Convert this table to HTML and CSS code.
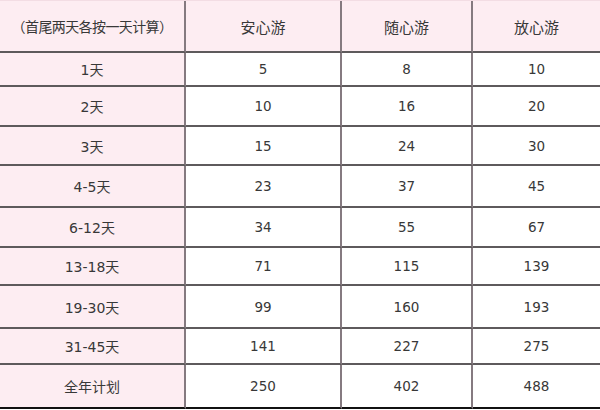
FILE: index.html
```html
<!DOCTYPE html>
<html lang="zh">
<head>
<meta charset="utf-8">
<link rel="stylesheet" href="styles.css">
</head>
<body>
<table class="price">
  <colgroup>
    <col class="c1"><col class="c2"><col class="c3"><col class="c4">
  </colgroup>
  <tr class="r0"><th class="label">（首尾两天各按一天计算）</th><th>安心游</th><th>随心游</th><th class="last">放心游</th></tr>
  <tr class="r1"><td class="label">1天</td><td>5</td><td>8</td><td class="last">10</td></tr>
  <tr class="r2"><td class="label">2天</td><td>10</td><td>16</td><td class="last">20</td></tr>
  <tr class="r3"><td class="label">3天</td><td>15</td><td>24</td><td class="last">30</td></tr>
  <tr class="r4"><td class="label">4-5天</td><td>23</td><td>37</td><td class="last">45</td></tr>
  <tr class="r5"><td class="label">6-12天</td><td>34</td><td>55</td><td class="last">67</td></tr>
  <tr class="r6"><td class="label">13-18天</td><td>71</td><td>115</td><td class="last">139</td></tr>
  <tr class="r7"><td class="label">19-30天</td><td>99</td><td>160</td><td class="last">193</td></tr>
  <tr class="r8"><td class="label">31-45天</td><td>141</td><td>227</td><td class="last">275</td></tr>
  <tr class="r9"><td class="label">全年计划</td><td>250</td><td>402</td><td class="last">488</td></tr>
</table>
</body>
</html>
```
FILE: styles.css
```css
html, body {
  margin: 0;
  padding: 0;
  background: #ffffff;
}
.price {
  width: 600px;
  table-layout: fixed;
  border-collapse: separate;
  border-spacing: 0;
  font-family: "DejaVu Sans", "Noto Sans CJK SC", sans-serif;
  font-size: 13.5px;
  color: #383838;
  border-top: 1px solid #f3dde4;
}
.c1 { width: 186px; }
.c2 { width: 156px; }
.c3 { width: 131px; }
.c4 { width: 127px; }
.price th, .price td {
  padding: 0;
  text-align: center;
  vertical-align: middle;
  font-weight: normal;
  border-bottom: 2px solid #5e5a5c;
  border-right: 2px solid #857a80;
  box-sizing: border-box;
  white-space: nowrap;
}
.price th {
  background: #fdedf2;
  font-family: "Noto Sans CJK SC", sans-serif;
  font-size: 15px;
}
.price .label {
  background: #fdedf2;
}
.price td.label {
  font-size: 14px;
}
.price th.label {
  font-size: 14px;
  letter-spacing: -0.6px;
}
.price .last {
  border-right: none;
}
.r0 { height: 52px; }
.r1 { height: 34px; }
.r2 { height: 40px; }
.r3 { height: 39px; }
.r4 { height: 42px; }
.r5 { height: 40px; }
.r6 { height: 38px; }
.r7 { height: 43px; }
.r8 { height: 36px; }
.r9 { height: 44px; }
.r9 td { border-bottom-color: #111111; }
```
